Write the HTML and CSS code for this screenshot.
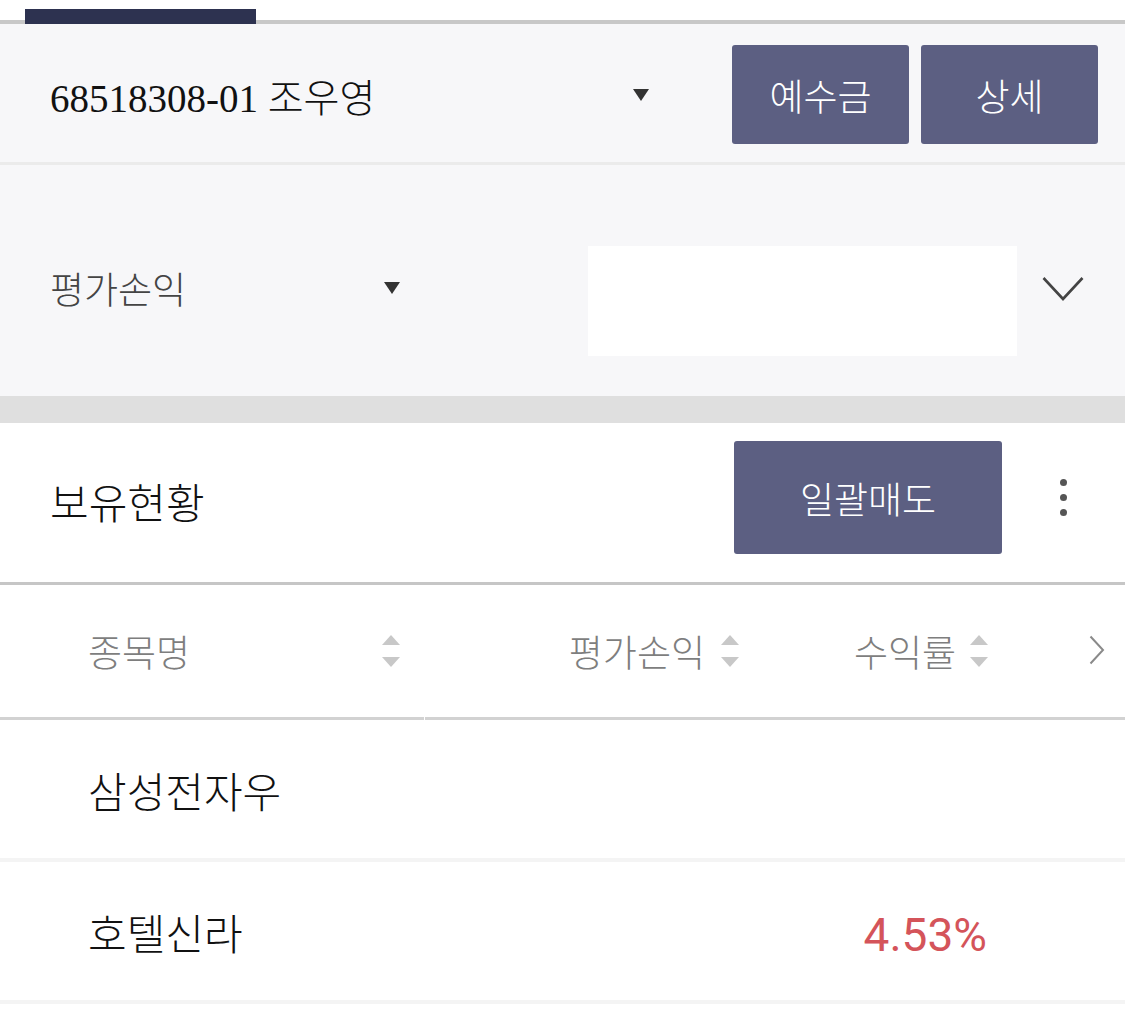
FILE: index.html
```html
<!DOCTYPE html>
<html lang="ko">
<head>
<meta charset="utf-8">
<title>보유현황</title>
<link rel="stylesheet" href="styles.css">
</head>
<body>
<div class="tabs"><span class="tab-indicator"></span></div>

<section class="account">
  <div class="account-select">
    <span class="account-text">68518308-01 조우영</span>
    <svg class="caret" width="16" height="12" viewBox="0 0 16 12"><path d="M0 0H16L8 12Z" fill="#333"/></svg>
  </div>
  <button class="btn btn-sm">예수금</button>
  <button class="btn btn-sm">상세</button>
</section>

<section class="filter">
  <div class="filter-select">
    <span class="filter-label">평가손익</span>
    <svg class="caret" width="16" height="12" viewBox="0 0 16 12"><path d="M0 0H16L8 12Z" fill="#333"/></svg>
  </div>
  <div class="filter-box"></div>
  <svg class="chev-down" width="42" height="26" viewBox="0 0 42 26"><path d="M1.5 2L21 23L40.5 2" fill="none" stroke="#444" stroke-width="2.6"/></svg>
</section>

<div class="band"></div>

<section class="holdings-head">
  <h2 class="holdings-title">보유현황</h2>
  <button class="btn btn-lg">일괄매도</button>
  <div class="kebab"><i></i><i></i><i></i></div>
</section>

<div class="table">
  <div class="thead">
    <div class="th th-name"><span>종목명</span><span class="sort"></span></div>
    <div class="th th-pl"><span>평가손익</span><span class="sort"></span></div>
    <div class="th th-rate"><span>수익률</span><span class="sort"></span></div>
    <div class="th th-more"><svg width="16" height="30" viewBox="0 0 16 30"><path d="M1.5 1.5L14 15L1.5 28.5" fill="none" stroke="#8a8a8a" stroke-width="2"/></svg></div>
  </div>
  <div class="tr">
    <div class="td td-name">삼성전자우</div>
    <div class="td td-pl"></div>
    <div class="td td-rate"></div>
  </div>
  <div class="tr">
    <div class="td td-name">호텔신라</div>
    <div class="td td-pl"></div>
    <div class="td td-rate up">4.53%</div>
  </div>
</div>
</body>
</html>
```

FILE: styles.css
```css
* { box-sizing: border-box; }
html, body { margin: 0; padding: 0; background: #fff; }
body {
  width: 1125px;
  font-family: "Noto Sans CJK KR", "Noto Sans", sans-serif;
  font-weight: 300;
  color: #111;
}

.tabs {
  position: relative;
  height: 24px;
  border-bottom: 4px solid #c8c8c8;
}
.tab-indicator {
  position: absolute;
  left: 25px;
  top: 9px;
  width: 231px;
  height: 15px;
  background: #2d3250;
}

.account {
  display: flex;
  align-items: center;
  height: 141px;
  padding: 3px 27px 0 50px;
  background: #f7f7f9;
  border-bottom: 3px solid #ebebeb;
}
.account-select {
  flex: 1;
  display: flex;
  align-items: center;
  justify-content: space-between;
  padding-right: 83px;
}
.account-text {
  font-family: "Liberation Serif", "Noto Sans CJK KR", serif;
  font-weight: 300;
  font-size: 39px;
  color: #111;
}
.caret { display: block; flex: none; }

.btn {
  border: 0;
  border-radius: 3px;
  background: #5c5f82;
  color: #fff;
  font-family: "Noto Sans CJK KR", sans-serif;
  font-weight: 300;
  font-size: 37px;
  padding: 0;
}
.btn-sm { width: 177px; height: 99px; }
.btn-sm + .btn-sm { margin-left: 12px; }
.btn-lg { width: 268px; height: 113px; }

.filter {
  display: flex;
  align-items: flex-start;
  height: 231px;
  padding: 81px 0 0 50px;
  background: #f7f7f9;
}
.filter-select {
  display: flex;
  align-items: center;
  justify-content: space-between;
  width: 350px;
  height: 40px;
  margin-top: 22px;
}
.filter-label { font-size: 37px; color: #444; line-height: 40px; }
.filter-box {
  width: 429px;
  height: 110px;
  margin-left: 188px;
  background: #fff;
}
.chev-down { margin: 30px 0 0 25px; display: block; }

.band { height: 27px; background: #dfdfdf; }

.holdings-head {
  display: flex;
  align-items: center;
  height: 162px;
  padding: 0 0 10px 50px;
  border-bottom: 3px solid #c6c6c6;
}
.holdings-title {
  flex: 1;
  margin: 6px 0 0;
  font-size: 42px;
  font-weight: 300;
  color: #111;
}
.kebab {
  display: flex;
  flex-direction: column;
  align-items: center;
  gap: 8px;
  width: 123px;
}
.kebab i {
  display: block;
  width: 7px;
  height: 7px;
  border-radius: 50%;
  background: #555;
}

.thead {
  display: flex;
  height: 135px;
}
.th {
  display: flex;
  align-items: center;
  font-size: 37px;
  color: #7e7e7e;
  border-bottom: 3px solid #d2d2d2;
}
.th-name { width: 424px; padding: 0 24px 0 88px; justify-content: space-between; }
.th-pl { width: 314px; margin-left: 1px; justify-content: flex-end; gap: 16px; }
.th-rate { width: 249px; justify-content: flex-end; gap: 14px; }
.th-more { flex: 1; justify-content: flex-end; padding-right: 20px; }
.th-more svg { display: block; margin-top: -3px; }

.sort {
  position: relative;
  width: 18px;
  height: 32px;
  flex: none;
}
.sort::before, .sort::after {
  content: "";
  position: absolute;
  left: 0;
  border-left: 9px solid transparent;
  border-right: 9px solid transparent;
}
.sort::before { top: 0; border-bottom: 10px solid #c8c8c8; }
.sort::after { bottom: 0; border-top: 10px solid #c8c8c8; }

.tr {
  display: flex;
  align-items: center;
  height: 142px;
  border-bottom: 4px solid #f4f4f4;
}
.td-name { width: 424px; padding-left: 88px; font-size: 42px; color: #111; }
.td-pl { width: 315px; }
.td-rate {
  width: 248px;
  text-align: right;
  font-family: Roboto, "Noto Sans", sans-serif;
  font-weight: 400;
  font-size: 46px;
  padding-top: 8px;
}
.up { color: #d4545a; }
```
